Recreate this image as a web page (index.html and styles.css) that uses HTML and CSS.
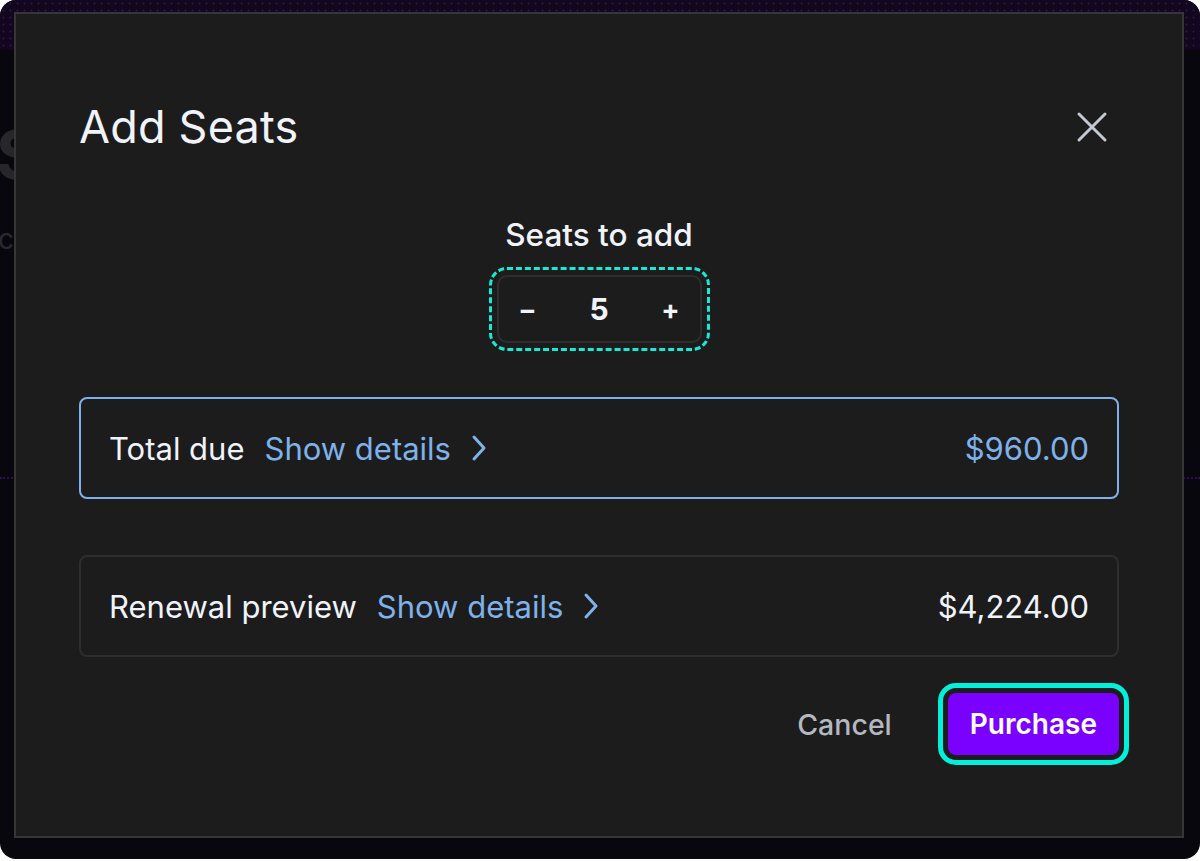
FILE: index.html
```html
<!DOCTYPE html>
<html lang="en">
<head>
  <meta charset="UTF-8">
  <meta name="viewport" content="width=device-width, initial-scale=1.0">
  <title>Add Seats</title>
  <link rel="stylesheet" href="styles.css">
</head>
<body>
  <div class="screen">
    <div class="page">
      <div class="topbar"></div>
      <div class="page-body">
        <h2 class="page-title">Seats</h2>
        <p class="page-sub">contract</p>
      </div>
      <div class="page-divider"></div>
    </div>

    <div class="modal" role="dialog" aria-labelledby="modal-title">
      <div class="modal-header">
        <h1 id="modal-title">Add Seats</h1>
        <button type="button" class="close-btn" aria-label="Close">
          <svg width="32" height="32" viewBox="0 0 32 32"><path d="M3 3 L29 29 M29 3 L3 29" /></svg>
        </button>
      </div>

      <div class="seats">
        <div class="seats-label">Seats to add</div>
        <div class="stepper">
          <button type="button" class="step-btn">−</button>
          <span class="step-value">5</span>
          <button type="button" class="step-btn">+</button>
        </div>
      </div>

      <div class="summary summary-active">
        <span class="summary-label">Total due</span>
        <a class="details-link" href="#">Show details
          <svg width="18" height="28" viewBox="0 0 18 28"><path d="M4 3 L14 14 L4 25" /></svg>
        </a>
        <span class="summary-amount">$960.00</span>
      </div>

      <div class="summary">
        <span class="summary-label">Renewal preview</span>
        <a class="details-link" href="#">Show details
          <svg width="18" height="28" viewBox="0 0 18 28"><path d="M4 3 L14 14 L4 25" /></svg>
        </a>
        <span class="summary-amount">$4,224.00</span>
      </div>

      <div class="modal-footer">
        <button type="button" class="btn-cancel">Cancel</button>
        <button type="button" class="btn-purchase">Purchase</button>
      </div>
    </div>
  </div>
</body>
</html>
```

FILE: styles.css
```css
body {
  margin: 0;
  background-color: #ffffff;
  font-family: Inter, "Noto Sans", sans-serif;
}
button {
  font-family: inherit;
  background: none;
  border: none;
  cursor: pointer;
}
.screen {
  position: relative;
  width: 1200px;
  height: 859px;
  border-radius: 16px;
  overflow: hidden;
  background-color: #08070d;
}

/* page behind the dialog */
.topbar {
  height: 50px;
  background-color: #12071f;
  background-image: radial-gradient(circle, #2a1948 0.8px, transparent 1.2px);
  background-size: 7px 7px;
}
.page-body {
  height: 427px;
  overflow: hidden;
}
.page-title {
  margin: 70px 0 0 -4px;
  font-size: 68px;
  font-weight: 700;
  color: #26262b;
  line-height: 1;
}
.page-sub {
  margin: 34px 0 0 -2px;
  font-size: 28px;
  color: #2a2a30;
}
.page-divider {
  border-top: 2px dotted #2a0f52;
}

/* dialog */
.modal {
  position: absolute;
  left: 14px;
  top: 12px;
  width: 1170px;
  height: 826px;
  box-sizing: border-box;
  border: 2px solid #363636;
  background-color: #1c1c1c;
  padding: 86px 63px 0;
  color: #f0f3fa;
}
.modal-header {
  display: flex;
  align-items: center;
  justify-content: space-between;
  height: 53px;
}
.modal-header h1 {
  margin: 0;
  font-size: 45px;
  font-weight: 400;
  line-height: 53px;
  letter-spacing: 0.2px;
}
.close-btn {
  width: 54px;
  height: 44px;
  padding: 0;
  display: flex;
  align-items: center;
  justify-content: center;
}
.close-btn path {
  stroke: #c4c8d0;
  stroke-width: 3;
  stroke-linecap: round;
  fill: none;
}

.seats {
  display: flex;
  flex-direction: column;
  align-items: center;
  margin-top: 63px;
}
.seats-label {
  font-size: 31.5px;
  font-weight: 500;
  line-height: 38px;
}
.stepper {
  display: flex;
  align-items: center;
  width: 205px;
  height: 68px;
  box-sizing: border-box;
  margin-top: 21px;
  border: 2px solid #2e2e2e;
  border-radius: 10px;
  outline: 3px dashed #19e8d5;
  outline-offset: 5px;
}
.step-btn {
  width: 58px;
  height: 100%;
  color: #f0f3fa;
  font-size: 27px;
  font-weight: 700;
  padding: 0;
}
.step-value {
  flex: 1;
  text-align: center;
  font-size: 30px;
  font-weight: 700;
}

.summary {
  display: flex;
  align-items: center;
  height: 102px;
  box-sizing: border-box;
  margin-top: 56px;
  padding: 0 28px;
  border: 2px solid #2e2e2e;
  border-radius: 8px;
  font-size: 31px;
}
.summary-active {
  margin-top: 54px;
  border-color: #7fb2ea;
}
.details-link {
  display: flex;
  align-items: center;
  margin-left: 20px;
  color: #7fb2ea;
  text-decoration: none;
}
.details-link svg {
  margin-left: 19px;
}
.details-link path {
  stroke: #7fb2ea;
  stroke-width: 3;
  stroke-linecap: round;
  stroke-linejoin: round;
  fill: none;
}
.summary-amount {
  margin-left: auto;
}
.summary-active .summary-amount {
  color: #7fb2ea;
}

.modal-footer {
  display: flex;
  justify-content: flex-end;
  align-items: center;
  gap: 34px;
  margin-top: 36px;
}
.btn-cancel {
  height: 62px;
  padding: 0 22px;
  font-size: 28.5px;
  font-weight: 500;
  color: #b4b8c0;
}
.btn-purchase {
  height: 62px;
  padding: 0 22px;
  border-radius: 8px;
  background-color: #7a00ff;
  color: #ffffff;
  font-size: 28px;
  font-weight: 600;
  outline: 5px solid #00f0da;
  outline-offset: 5px;
}
```
